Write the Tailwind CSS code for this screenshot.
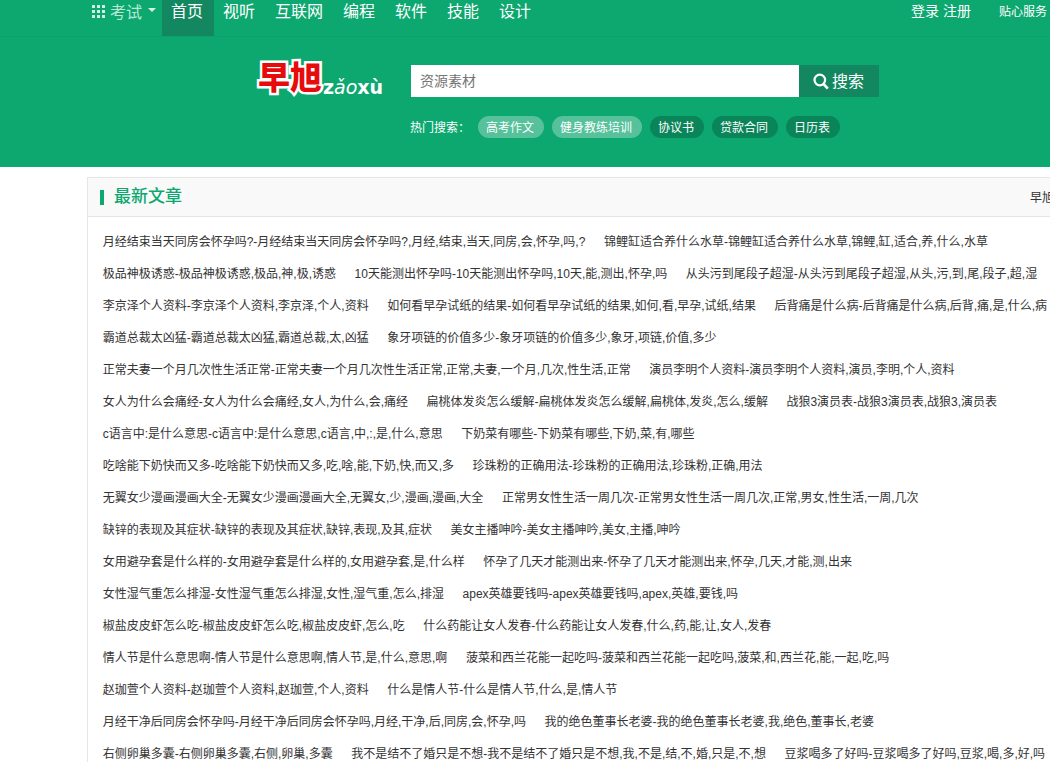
<!DOCTYPE html>
<html lang="zh-CN">
<head>
  <meta charset="UTF-8">
  <title>早旭</title>
  <script src="https://cdn.jsdelivr.net/npm/@tailwindcss/browser@4"></script>
  <style>
    body {
      font-family: "Liberation Sans", "Noto Sans CJK SC", sans-serif;
    }
    .logo-cn {
      -webkit-text-stroke: 5px #fff;
      paint-order: stroke fill;
      stroke-linejoin: round;
    }
  </style>
</head>
<body class="bg-white text-[#333] text-xs w-[1050px] h-[762px] overflow-hidden">

  <header class="bg-[#0da770] text-white h-[167px]">
    <!-- Top nav -->
    <div class="h-[37px] border-b border-[#0f9f6a] flex whitespace-nowrap">
      <div class="w-[162px] pl-[92px] flex items-start text-[#b9e7d6]">
        <svg class="mt-[5px] shrink-0" width="13" height="13" viewBox="0 0 13 13" fill="#d3f0e5" shape-rendering="crispEdges">
          <path d="M0 0h3v3H0zM5 0h3v3H5zM10 0h3v3h-3zM0 5h3v3H0zM5 5h3v3H5zM10 5h3v3h-3zM0 10h3v3H0zM5 10h3v3H5zM10 10h3v3h-3z"/>
        </svg>
        <span class="ml-[5px] text-base leading-[26px]">考试</span>
        <svg class="mt-2 ml-[6px] shrink-0" width="8" height="4" viewBox="0 0 8 4" fill="#d3f0e5"><path d="M0 0h8L4 4z"/></svg>
      </div>
      <nav class="flex text-base leading-6">
        <a href="#" class="h-9 pl-[9px] w-[52px] bg-[#138860]">首页</a>
        <a href="#" class="h-9 pl-[9px] w-[52px]">视听</a>
        <a href="#" class="h-9 pl-[9px] w-[68px]">互联网</a>
        <a href="#" class="h-9 pl-[9px] w-[52px]">编程</a>
        <a href="#" class="h-9 pl-[9px] w-[52px]">软件</a>
        <a href="#" class="h-9 pl-[9px] w-[52px]">技能</a>
        <a href="#" class="h-9 pl-[9px] w-[52px]">设计</a>
      </nav>
      <div class="ml-auto pr-[3px] flex leading-6">
        <span class="text-sm leading-[22px]"><a href="#">登录</a> <a href="#">注册</a></span>
        <a href="#" class="ml-7">贴心服务</a>
      </div>
    </div>

    <!-- Logo and search -->
    <div class="flex pl-[257px] pt-7">
      <a href="#" class="w-[154px] -mt-[5px] h-10 flex items-start whitespace-nowrap">
        <span class="logo-cn w-[66px] pl-px text-[32px] leading-[37px] font-black text-[#e60c0c]">早旭</span>
        <span class="pt-[15px] text-[19px] leading-6 font-bold font-['DejaVu_Sans']">z<span class="font-normal italic">ǎo</span>xù</span>
      </a>
      <div>
        <form class="flex h-8">
          <input type="text" placeholder="资源素材" class="w-[388px] h-8 bg-white px-[9px] text-sm placeholder:text-[#757575] outline-none">
          <button type="button" class="w-20 h-8 bg-[#138860] flex items-center pl-[14px] text-base">
            <svg width="16" height="17" viewBox="0 0 16 17" fill="none" stroke="#fff" stroke-width="2.2"><circle cx="6.8" cy="7" r="5.3"/><path d="M10.6 11l4.2 4.6" stroke-width="2.6"/></svg>
            <span class="ml-[3px] pt-[2px]">搜索</span>
          </button>
        </form>
        <div class="flex gap-2 mt-[19px] leading-6 whitespace-nowrap">
          <span class="w-[60px] -ml-px">热门搜索：</span>
          <a href="#" class="h-[22px] pl-2 pr-[10px] rounded-full bg-[#56c19b]">高考作文</a>
          <a href="#" class="h-[22px] pl-2 pr-[10px] rounded-full bg-[#56c19b]">健身教练培训</a>
          <a href="#" class="h-[22px] pl-2 pr-[10px] rounded-full bg-[#0a8459]">协议书</a>
          <a href="#" class="h-[22px] pl-2 pr-[10px] rounded-full bg-[#0a8459]">贷款合同</a>
          <a href="#" class="h-[22px] pl-2 pr-[10px] rounded-full bg-[#0a8459]">日历表</a>
        </div>
      </div>
    </div>
  </header>

  <!-- Latest articles -->
  <main class="ml-[87px] mt-[10px] w-[963px] overflow-hidden border border-r-0 border-[#e6e6e6] whitespace-nowrap">
    <div class="h-[39px] bg-[#f9f9f9] border-b border-[#e6e6e6] flex items-center pl-3">
      <i class="w-1 h-[15px] shrink-0 bg-[#0da770]"></i>
      <h2 class="w-[926px] shrink-0 pl-[10px] text-[17px] leading-[38px] font-medium text-[#0da770]">最新文章</h2>
      <span class="leading-[38px] pt-px">早旭</span>
    </div>
    <div id="list" class="pt-[9px] pl-[14.7px] leading-8"></div>
  </main>

  <script>
    const rows = [
      ['月经结束当天同房会怀孕吗?-月经结束当天同房会怀孕吗?,月经,结束,当天,同房,会,怀孕,吗,?', '锦鲤缸适合养什么水草-锦鲤缸适合养什么水草,锦鲤,缸,适合,养,什么,水草'],
      ['极品神极诱惑-极品神极诱惑,极品,神,极,诱惑', '10天能测出怀孕吗-10天能测出怀孕吗,10天,能,测出,怀孕,吗', '从头污到尾段子超湿-从头污到尾段子超湿,从头,污,到,尾,段子,超,湿'],
      ['李京泽个人资料-李京泽个人资料,李京泽,个人,资料', '如何看早孕试纸的结果-如何看早孕试纸的结果,如何,看,早孕,试纸,结果', '后背痛是什么病-后背痛是什么病,后背,痛,是,什么,病'],
      ['霸道总裁太凶猛-霸道总裁太凶猛,霸道总裁,太,凶猛', '象牙项链的价值多少-象牙项链的价值多少,象牙,项链,价值,多少'],
      ['正常夫妻一个月几次性生活正常-正常夫妻一个月几次性生活正常,正常,夫妻,一个月,几次,性生活,正常', '演员李明个人资料-演员李明个人资料,演员,李明,个人,资料'],
      ['女人为什么会痛经-女人为什么会痛经,女人,为什么,会,痛经', '扁桃体发炎怎么缓解-扁桃体发炎怎么缓解,扁桃体,发炎,怎么,缓解', '战狼3演员表-战狼3演员表,战狼3,演员表'],
      ['c语言中:是什么意思-c语言中:是什么意思,c语言,中,:,是,什么,意思', '下奶菜有哪些-下奶菜有哪些,下奶,菜,有,哪些'],
      ['吃啥能下奶快而又多-吃啥能下奶快而又多,吃,啥,能,下奶,快,而又,多', '珍珠粉的正确用法-珍珠粉的正确用法,珍珠粉,正确,用法'],
      ['无翼女少漫画漫画大全-无翼女少漫画漫画大全,无翼女,少,漫画,漫画,大全', '正常男女性生活一周几次-正常男女性生活一周几次,正常,男女,性生活,一周,几次'],
      ['缺锌的表现及其症状-缺锌的表现及其症状,缺锌,表现,及其,症状', '美女主播呻吟-美女主播呻吟,美女,主播,呻吟'],
      ['女用避孕套是什么样的-女用避孕套是什么样的,女用避孕套,是,什么样', '怀孕了几天才能测出来-怀孕了几天才能测出来,怀孕,几天,才能,测,出来'],
      ['女性湿气重怎么排湿-女性湿气重怎么排湿,女性,湿气重,怎么,排湿', 'apex英雄要钱吗-apex英雄要钱吗,apex,英雄,要钱,吗'],
      ['椒盐皮皮虾怎么吃-椒盐皮皮虾怎么吃,椒盐皮皮虾,怎么,吃', '什么药能让女人发春-什么药能让女人发春,什么,药,能,让,女人,发春'],
      ['情人节是什么意思啊-情人节是什么意思啊,情人节,是,什么,意思,啊', '菠菜和西兰花能一起吃吗-菠菜和西兰花能一起吃吗,菠菜,和,西兰花,能,一起,吃,吗'],
      ['赵珈萱个人资料-赵珈萱个人资料,赵珈萱,个人,资料', '什么是情人节-什么是情人节,什么,是,情人节'],
      ['月经干净后同房会怀孕吗-月经干净后同房会怀孕吗,月经,干净,后,同房,会,怀孕,吗', '我的绝色董事长老婆-我的绝色董事长老婆,我,绝色,董事长,老婆'],
      ['右侧卵巢多囊-右侧卵巢多囊,右侧,卵巢,多囊', '我不是结不了婚只是不想-我不是结不了婚只是不想,我,不是,结,不,婚,只是,不,想', '豆浆喝多了好吗-豆浆喝多了好吗,豆浆,喝,多,好,吗']
    ];
    document.getElementById('list').innerHTML = rows.map(row =>
      `<div class="h-8">${row.map(t => `<a href="#" class="mr-[15.2px]">${t}</a>`).join(' ')}</div>`
    ).join('');
  </script>
</body>
</html>
